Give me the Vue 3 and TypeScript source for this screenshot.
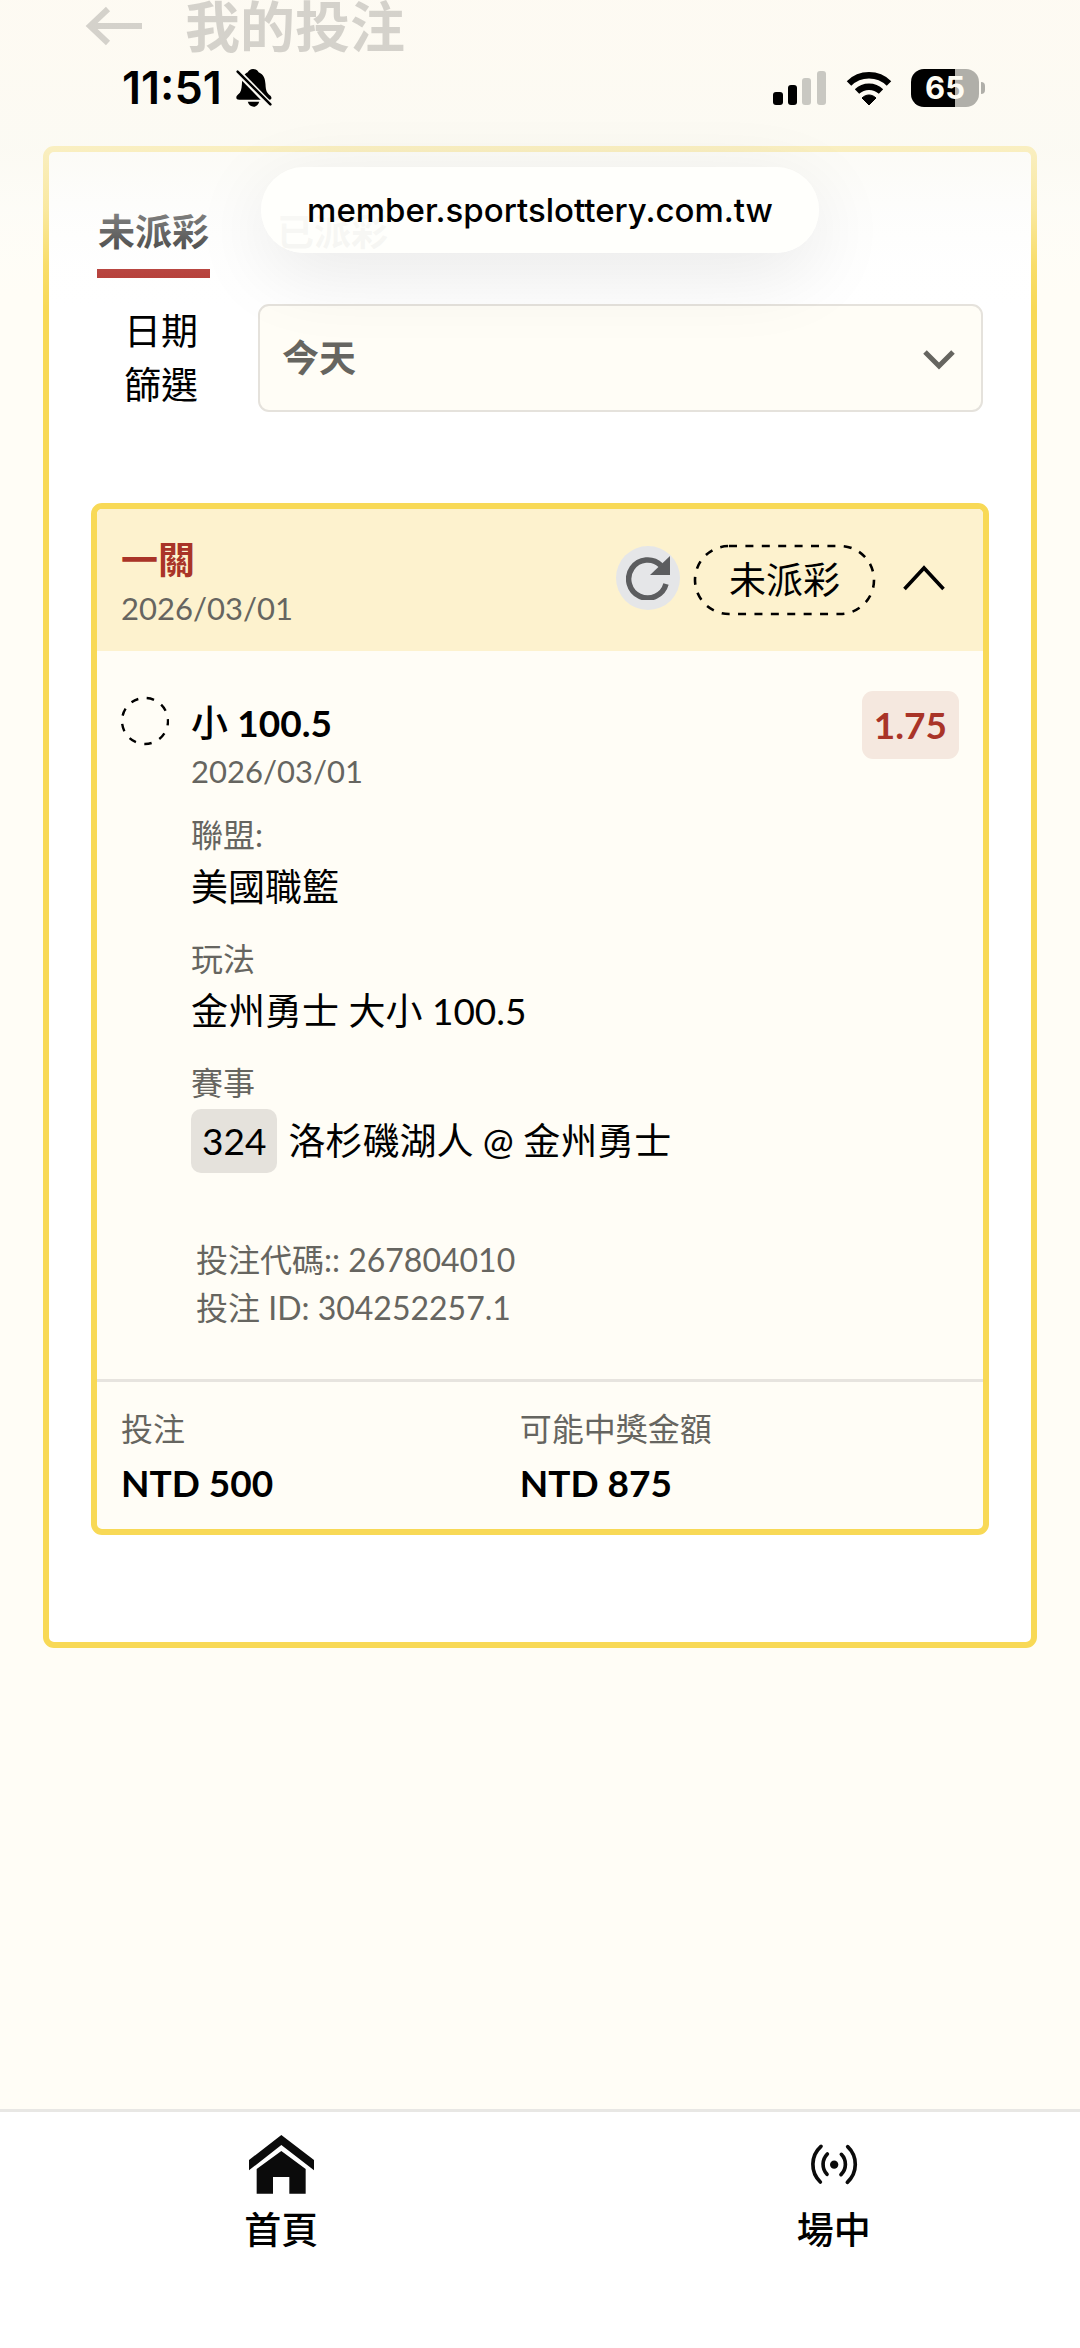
<script setup lang="ts">
import { ref } from 'vue'

interface Field {
  label: string
  value: string
  code?: string
}

const range = ref('today')
const open = ref(true)

const fields: Field[] = [
  { label: '聯盟:', value: '美國職籃' },
  { label: '玩法', value: '金州勇士 大小 100.5' },
  { label: '賽事', value: '洛杉磯湖人 @ 金州勇士', code: '324' },
]

const totals = [
  { label: '投注', value: 'NTD 500' },
  { label: '可能中獎金額', value: 'NTD 875' },
]
</script>

<template>
  <div class="page">
    <header class="title-bar">
      <button class="back" type="button" aria-label="返回">
        <svg width="58" height="40" viewBox="0 0 58 40" fill="none" stroke="currentColor" stroke-width="6">
          <path d="M57 20H6M23 3L5 20l18 17" />
        </svg>
      </button>
      <h1>我的投注</h1>
    </header>

    <main class="panel">
      <nav class="tabs">
        <button class="tab active" type="button">未派彩</button>
        <button class="tab" type="button">已派彩</button>
      </nav>

      <div class="filter">
        <label for="range">日期篩選</label>
        <div class="select">
          <select id="range" v-model="range">
            <option value="today">今天</option>
          </select>
          <svg class="caret" width="32" height="22" viewBox="0 0 32 22" fill="none" stroke="currentColor" stroke-width="5">
            <path d="M2 3l14 14L30 3" />
          </svg>
        </div>
      </div>

      <article class="bet">
        <header class="bet-head">
          <div class="bet-name">
            <h2>一關</h2>
            <p class="date">2026/03/01</p>
          </div>
          <button class="refresh" type="button" aria-label="重新整理">
            <svg width="44" height="44" viewBox="0 0 44 44">
              <path d="M35 9.500A19 19 0 1 0 40 28" fill="none" stroke="currentColor" stroke-width="5.500" />
              <path d="M44 0v19H24z" fill="currentColor" />
            </svg>
          </button>
          <span class="status">
            <svg width="183" height="72" viewBox="0 0 183 72" fill="none" stroke="#000" stroke-width="2.600" stroke-dasharray="8 8.400">
              <rect x="2" y="2" width="179" height="68" rx="34" />
            </svg>
            未派彩
          </span>
          <button class="toggle" type="button" aria-label="收合" :aria-expanded="open" @click="open = !open">
            <svg width="42" height="26" viewBox="0 0 42 26" fill="none" stroke="currentColor" stroke-width="3.600">
              <path d="M1.500 24L21 3l19.500 21" />
            </svg>
          </button>
        </header>

        <div v-show="open" class="leg">
          <svg class="pending" width="48" height="50" viewBox="0 0 48 50" fill="none" stroke="#000" stroke-width="2.400">
            <circle cx="24" cy="25" r="23" stroke-dasharray="7.500 8.560" stroke-dashoffset="3" />
          </svg>
          <div class="detail">
            <h3>小 <b>100.5</b></h3>
            <p class="date">2026/03/01</p>
            <dl class="fields">
              <div v-for="f in fields" :key="f.label">
                <dt>{{ f.label }}</dt>
                <dd><span v-if="f.code" class="code">{{ f.code }}</span>{{ f.value }}</dd>
              </div>
            </dl>
            <div class="refs">
              <p>投注代碼:: 267804010</p>
              <p>投注 ID: 304252257.1</p>
            </div>
          </div>
          <strong class="odds">1.75</strong>
        </div>

        <dl class="totals">
          <div v-for="t in totals" :key="t.label">
            <dt>{{ t.label }}</dt>
            <dd>{{ t.value }}</dd>
          </div>
        </dl>
      </article>
    </main>

    <nav class="bottom-nav">
      <a href="#home">
        <svg width="65" height="59" viewBox="150 135 195 177" fill="#0b0b0b">
          <path d="M247 135l98 75v31l-98-76-97 76v-31z" />
          <path d="M247 183l73 54v74h-49v-50h-49v50h-49v-74z" />
        </svg>
        首頁
      </a>
      <a href="#live">
        <svg width="50" height="59" viewBox="203 138 150 177" fill="none" stroke="#0b0b0b" stroke-width="11" stroke-linecap="round">
          <path d="M239 172a73 73 0 0 0-2 107M319 173a73 73 0 0 1-1 107" />
          <path d="M258 195a44 44 0 0 0-1 61M300 196a43 43 0 0 1-1 61" />
          <circle cx="278.500" cy="227" r="12.500" fill="#0b0b0b" stroke="none" />
        </svg>
        場中
      </a>
    </nav>

    <div class="chrome">
      <div class="status-bar">
        <time>11:51</time>
        <svg class="bell" width="36" height="38" viewBox="0 0 108 116">
          <path d="M51 0c10 0 15 6 17 10 16 7 20 20 21 36 1 20 4 27 13 34 4 3 6 6 5 10 0 3-4 4-8 4H9c-6 0-9-3-9-7 0-5 3-7 6-10 8-6 10-15 11-30 2-22 5-31 18-37 3-5 8-10 16-10z" />
          <path d="M35 100h35c-3 10-9 15-17 15s-15-5-18-15z" />
          <path d="M-2 2L108 115" stroke="#fbfaf3" stroke-width="19" />
          <path d="M4 8L104 108" stroke="#000" stroke-width="7.500" stroke-linecap="round" />
        </svg>
        <div class="signals">
          <svg width="54" height="34" viewBox="0 0 54 34">
            <rect x="0" y="21" width="10" height="13" rx="3" />
            <rect x="15" y="14" width="9" height="20" rx="3" />
            <rect x="29" y="7" width="9" height="27" rx="3" fill="#c9c8c2" />
            <rect x="44" y="0" width="9" height="34" rx="3" fill="#c9c8c2" />
          </svg>
          <svg width="46" height="34" viewBox="0 0 46 34">
            <path d="M23 34l-7-7c4-4 10-4 14 0z" stroke="#000" stroke-linejoin="round" />
            <path d="M11 20.500a17.500 17.500 0 0 1 24 0M3 12.500a28.500 28.500 0 0 1 40 0" fill="none" stroke="#000" stroke-width="6.400" />
          </svg>
          <div class="battery"><span>65</span></div>
        </div>
      </div>
      <div class="address">member.sportslottery.com.tw</div>
    </div>
  </div>
</template>

<style>
body {
  margin: 0;
  background: #fffdf6;
}
</style>

<style scoped>
.page {
  position: relative;
  display: flex;
  flex-direction: column;
  min-height: 100vh;
  overflow: hidden;
  background: #fffdf6;
  color: #000;
  font: 400 37px/52px Lato, "Noto Sans CJK TC", sans-serif;
}

h1, h2, h3, p, dl, dd {
  margin: 0;
}

button {
  padding: 0;
  border: 0;
  background: none;
  color: inherit;
  font: inherit;
}

svg {
  display: block;
  flex: none;
}

.title-bar {
  display: flex;
  align-items: center;
  gap: 42px;
  height: 52px;
  padding: 0 85px 94px;
}

h1 {
  font-size: 55px;
  font-weight: 700;
}

.panel {
  margin: 0 43px;
  padding: 54px 42px 107px;
  border: 6px solid #f8d956;
  border-radius: 11px;
  background: #fff;
}

.tabs {
  display: flex;
  gap: 66px;
  padding: 0 6px;
}

.tab {
  padding: 0 1px 11px;
  border-bottom: 9px solid transparent;
  color: #222;
  font-weight: 700;
}

.tab.active {
  border-color: #b0302a;
}

.filter {
  display: flex;
  align-items: center;
  gap: 58px;
  margin: 26px 0 91px;
  padding: 0 6px 0 33px;
}

.filter label {
  width: 76px;
  line-height: 54px;
}

.select {
  position: relative;
  flex: 1;
  color: #666560;
}

select {
  display: block;
  width: 100%;
  height: 108px;
  padding: 0 22px;
  border: 2px solid #e5e2dc;
  border-radius: 11px;
  appearance: none;
  background: #fffdf6;
  color: inherit;
  font: inherit;
  font-weight: 700;
}

.caret {
  position: absolute;
  top: 45px;
  right: 28px;
  pointer-events: none;
}

.bet {
  overflow: hidden;
  border: 6px solid #f8d956;
  border-radius: 11px;
  background: #fffdf6;
}

.bet-head {
  display: flex;
  align-items: center;
  padding: 19px 38px 19px 24px;
  background: #fdf2ce;
}

.bet-name {
  flex: 1;
  padding-top: 8px;
}

h2 {
  color: #a93428;
  font-size: 37px;
  font-weight: 700;
  line-height: 48px;
}

.date,
dt,
.refs {
  color: #666560;
  font-size: 32px;
  line-height: 48px;
}

.date {
  font-size: 31px;
}

.refresh,
.toggle {
  margin-bottom: 4px;
}

.refresh {
  display: grid;
  place-items: center;
  width: 64px;
  height: 64px;
  border-radius: 50%;
  background: #e5e6e8;
  color: #5c5d5f;
}

.status {
  position: relative;
  margin: 0 27px 0 13px;
  padding: 10px 36px;
}

.status svg {
  position: absolute;
  inset: 0;
}

.leg {
  display: flex;
  align-items: flex-start;
  padding: 40px 24px 47px;
}

.pending {
  margin-top: 5px;
}

.detail {
  flex: 1;
  margin-left: 22px;
  padding-top: 8px;
}

h3 {
  font-size: 37px;
  font-weight: 500;
  line-height: 48px;
}

b {
  font-weight: 700;
}

.fields {
  display: grid;
  gap: 22px;
  margin-top: 16px;
}

.fields div {
  display: grid;
  gap: 2px;
}

.fields dd {
  display: flex;
  align-items: center;
  gap: 11px;
}

.code {
  padding: 6px 11px;
  border-radius: 10px;
  background: #e5e2dc;
}

.refs {
  margin-top: 63px;
  padding-left: 5px;
}

.odds {
  padding: 8px 12px;
  border-radius: 11px;
  background: #f5e8df;
  color: #a93428;
}

.totals {
  display: flex;
  padding: 23px 0 20px;
  border-top: 3px solid #e7e4df;
}

.totals div {
  display: grid;
  flex: 0 0 45%;
  box-sizing: border-box;
  gap: 4px;
  padding-left: 24px;
}

.totals dd {
  font-weight: 700;
}

.bottom-nav {
  display: flex;
  margin-top: auto;
  padding: 23px 0 92px 5px;
  border-top: 3px solid #e8e7e4;
  background: #fff;
}

.bottom-nav a {
  display: flex;
  flex: 0 0 51.4%;
  flex-direction: column;
  align-items: center;
  gap: 10px;
  color: #000;
  font-weight: 500;
  text-decoration: none;
}

/* Browser chrome floating over the scrolled page */
.chrome {
  position: absolute;
  inset: 0 0 auto;
  display: flex;
  flex-direction: column;
  align-items: center;
  height: 310px;
  background: linear-gradient(
    rgba(253, 250, 242, 0.84) 0,
    rgba(253, 250, 242, 0.84) 60px,
    rgba(250, 249, 242, 0.68) 150px,
    rgba(251, 251, 248, 0.45) 210px,
    rgba(253, 253, 250, 0.12) 265px,
    rgba(255, 255, 255, 0) 310px
  );
  font-family: Inter, sans-serif;
  pointer-events: none;
}

.status-bar {
  display: flex;
  align-self: stretch;
  align-items: center;
  height: 52px;
  padding: 62px 101px 53px 122px;
}

time {
  font-size: 45px;
  font-weight: 600;
}

.bell {
  margin-left: 14px;
}

.signals {
  display: flex;
  align-items: center;
  gap: 19px;
  margin-left: auto;
}

.battery {
  position: relative;
  width: 68px;
  border-radius: 13px;
  background: linear-gradient(90deg, #000 65%, #b0afa9 65%);
  color: #fdfcf4;
  font-size: 31px;
  font-weight: 700;
  line-height: 38px;
  text-align: center;
}

.battery::after {
  content: "";
  position: absolute;
  top: 13px;
  right: -6px;
  width: 4px;
  height: 12px;
  border-radius: 0 4px 4px 0;
  background: #b0afa9;
}

.address {
  padding: 17px 46px;
  border-radius: 43px;
  background: rgba(255, 255, 252, 0.95);
  box-shadow: 0 20px 80px rgba(0, 0, 0, 0.09);
  font-size: 33px;
  font-weight: 500;
}
</style>
